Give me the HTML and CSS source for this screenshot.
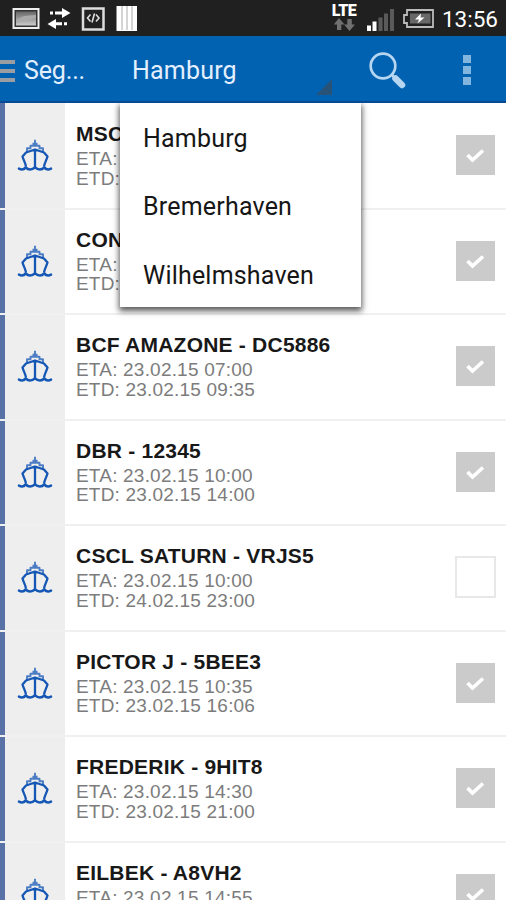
FILE: index.html
```html
<!DOCTYPE html>
<html lang="de">
<head>
<meta charset="utf-8">
<title>Segelliste</title>
<link rel="stylesheet" href="styles.css">
</head>
<body>
<svg class="defs" aria-hidden="true">
  <symbol id="ship" viewBox="0 0 36 34">
    <g fill="none" stroke="#1557b5" stroke-linejoin="round">
      <path stroke-width="1.900" d="M18 .8v6M15.500 4.700h5M10 14V9.200h3.500V6.700h9v2.500H26V14" opacity=".75"/>
      <path stroke-width="2.300" d="M9 27.500C8.700 24.500 6.500 21 5.500 17.500L9 13.500l9-3 9 3 3.500 4c-1 3.500-3.200 7-3.500 10M18 10.500V29"/>
      <path stroke-width="2.600" stroke-linecap="round" d="M2 29.700c3 1.600 4.700 1.200 6.700-1.300 2.500 2.800 6.300 2.800 9.300 0 3 2.800 6.800 2.800 9.300 0 2 2.500 3.700 2.900 6.700 1.300"/>
    </g>
  </symbol>
  <symbol id="check" viewBox="0 0 39 40">
    <path d="M11.500 20l5 5L27 15.500" fill="none" stroke="#fff" stroke-width="3.700"/>
  </symbol>
</svg>

<div class="screen">
  <header class="status">
    <svg class="status-left" width="140" height="36" viewBox="0 0 140 36">
      <defs><linearGradient id="photo" x2="0" y2="1"><stop stop-color="#666"/><stop offset="1" stop-color="#ccc"/></linearGradient></defs>
      <rect x="13.500" y="9" width="25" height="19" fill="#333" stroke="#eee" stroke-width="2"/>
      <rect x="16" y="11.500" width="20" height="14" fill="url(#photo)"/>
      <path d="M16 20l8-4 12-1v3l-20 5z" fill="#aaa"/>
      <g fill="#fff">
        <path d="M50 11.500h3v3h-3zM55 11.500h7V8l8.500 5-8.500 5v-3.500h-7zM64 22.300h3v3h-3zM62 22.300h-6V19l-8.500 5 8.500 5v-3.700h6z"/>
        <path d="M116.500 6H137v25h-20.500z"/>
      </g>
      <path d="M122 6v24M127 6v24M132 6v24" stroke="#aaa"/>
      <rect x="83" y="8.500" width="20.500" height="21" fill="#222" stroke="#ddd" stroke-width="2.500"/>
      <path d="M90.500 14.500L87.500 18l3 3.500M96 14.500l3 3.500-3 3.500M94.500 13.500l-2.500 9" fill="none" stroke="#ddd" stroke-width="1.600"/>
    </svg>
    <div class="status-right">
      <div class="lte">
        <span>LTE</span>
        <svg width="22" height="13" viewBox="0 0 22 13"><path fill="#707070" d="M6 0l5.500 6.500H8.300V12H4V6.500H.8zM16.500 13L22 6.500h-3.200V1h-4.500v5.500H11z"/></svg>
      </div>
      <svg class="signal" width="30" height="22" viewBox="0 0 30 22">
        <path fill="#fff" d="M1 16.500h4V22H1zM6.500 12.500h4V22h-4z"/>
        <path fill="#5a5a5a" d="M12.500 8.500h4V22h-4zM18 4.500h4V22h-4zM24 0h4v22h-4z"/>
      </svg>
      <svg class="battery" width="33" height="19" viewBox="0 0 33 19">
        <path d="M5 1h26v17H5v-4H2V6h3z" fill="#222" stroke="#bbb" stroke-width="1.800"/>
        <path d="M8 4.500h20.500v10H8z" fill="#686868"/>
        <path d="M19 4.500l-6 6h4l-1.500 4 7-6h-4z" fill="#fff"/>
      </svg>
      <span class="clock">13:56</span>
    </div>
  </header>

  <nav class="bar">
    <div class="burger"><i></i><i></i><i></i></div>
    <span class="title">Seg...</span>
    <div class="spinner">Hamburg<svg width="16" height="16" viewBox="0 0 16 16"><path d="M16 0v16H0z" fill="#285379"/></svg></div>
    <svg class="search" width="40" height="40" viewBox="0 0 40 40">
      <circle cx="15" cy="15" r="12.300" fill="none" stroke="#b5d5f0" stroke-width="2.700"/>
      <path d="M23.500 23.500l3.500 3.500" stroke="#b5d5f0" stroke-width="3"/>
      <path d="M27.500 27.500l6.500 6.500" stroke="#b5d5f0" stroke-width="6.500" stroke-linecap="round"/>
    </svg>
    <div class="more"><i></i><i></i><i></i></div>
    <div class="menu">
      <div>Hamburg</div>
      <div>Bremerhaven</div>
      <div>Wilhelmshaven</div>
    </div>
  </nav>

  <main class="list">
    <section class="row"><div class="icon"><svg><use href="#ship"/></svg></div><div class="info"><h2>MSC</h2><p>ETA:</p><p>ETD:</p></div><div class="box on"><svg><use href="#check"/></svg></div></section>
    <section class="row"><div class="icon"><svg><use href="#ship"/></svg></div><div class="info"><h2>CON</h2><p>ETA:</p><p>ETD:</p></div><div class="box on"><svg><use href="#check"/></svg></div></section>
    <section class="row"><div class="icon"><svg><use href="#ship"/></svg></div><div class="info"><h2>BCF AMAZONE - DC5886</h2><p>ETA: 23.02.15 07:00</p><p>ETD: 23.02.15 09:35</p></div><div class="box on"><svg><use href="#check"/></svg></div></section>
    <section class="row"><div class="icon"><svg><use href="#ship"/></svg></div><div class="info"><h2>DBR - 12345</h2><p>ETA: 23.02.15 10:00</p><p>ETD: 23.02.15 14:00</p></div><div class="box on"><svg><use href="#check"/></svg></div></section>
    <section class="row"><div class="icon"><svg><use href="#ship"/></svg></div><div class="info"><h2>CSCL SATURN - VRJS5</h2><p>ETA: 23.02.15 10:00</p><p>ETD: 24.02.15 23:00</p></div><div class="box"></div></section>
    <section class="row"><div class="icon"><svg><use href="#ship"/></svg></div><div class="info"><h2>PICTOR J - 5BEE3</h2><p>ETA: 23.02.15 10:35</p><p>ETD: 23.02.15 16:06</p></div><div class="box on"><svg><use href="#check"/></svg></div></section>
    <section class="row"><div class="icon"><svg><use href="#ship"/></svg></div><div class="info"><h2>FREDERIK - 9HIT8</h2><p>ETA: 23.02.15 14:30</p><p>ETD: 23.02.15 21:00</p></div><div class="box on"><svg><use href="#check"/></svg></div></section>
    <section class="row"><div class="icon"><svg><use href="#ship"/></svg></div><div class="info"><h2>EILBEK - A8VH2</h2><p>ETA: 23.02.15 14:55</p></div><div class="box on"><svg><use href="#check"/></svg></div></section>
  </main>
</div>
</body>
</html>
```
FILE: styles.css
```css
* { box-sizing: border-box; }
body { margin: 0; overflow: hidden; background: #fff; font-family: "Liberation Sans", sans-serif; }
.defs { display: none; }
svg { display: block; flex: none; }
.screen { display: flex; flex-direction: column; width: 506px; height: 900px; overflow: hidden; }

.status { flex: none; display: flex; justify-content: space-between; height: 36px; background: #202020; color: #fff; }
.status-right { display: flex; padding-right: 8px; }
.lte { display: flex; flex-direction: column; align-items: center; width: 26px; padding-top: 3px; }
.lte span { font: 900 16px/15px Roboto, sans-serif; letter-spacing: -.6px; height: 15px; }
.signal { margin: 9px 0 0 9px; }
.battery { margin: 9px 0 0 6px; }
.clock { margin-left: 7px; font: 22.500px/38px Roboto, sans-serif; }

.bar { position: relative; flex: none; display: flex; height: 67px; background: #0062b1; border-bottom: 2px solid #064a94; color: #e3efff; font: 25px/70px Roboto, sans-serif; letter-spacing: .2px; }
.burger { display: flex; flex-direction: column; gap: 5px; width: 15px; padding-top: 24px; }
.burger i { height: 4px; background: #9a9da2; }
.title { width: 96px; padding-left: 9px; letter-spacing: -.15px; }
.spinner { display: flex; justify-content: space-between; width: 221px; padding-left: 21px; }
.spinner svg { margin: 43px 0 0; }
.search { margin: 15px 0 0 36px; }
.more { display: flex; flex-direction: column; gap: 3px; margin-left: 55px; padding-top: 19px; }
.more i { width: 8px; height: 8px; background: #83b6df; }
.menu { position: absolute; z-index: 2; left: 120px; top: 67px; width: 241px; height: 204px; padding-left: 23px; background: #fff; color: #161616; box-shadow: 0 3px 6px 1px rgba(0,0,0,.65); clip-path: inset(0 -12px -14px -12px); }
.menu div { height: 68.300px; line-height: 71px; }

.list { flex: 1; overflow: hidden; padding-top: 1px; background: linear-gradient(90deg, #5872a8 5px, #eee 5px, #eee 65px, #fff 65px); }
.row { display: flex; height: 105.500px; border-bottom: 2px solid #f0f0f0; padding-left: 5px; }
.icon { width: 60px; padding: 35px 0 0 12px; }
.icon svg { width: 36px; height: 34px; }
.info { flex: 1; padding: 18px 0 0 11px; white-space: nowrap; }
h2 { margin: 0; height: 25px; font-size: 21px; line-height: 24px; color: #181818; letter-spacing: .22px; }
p { margin: 0; height: 19.500px; font-size: 19px; line-height: 23px; color: #7c7c7c; letter-spacing: .2px; }
.box { width: 41px; height: 42px; margin: 30px 10px 0 0; border: 2px solid #e8e8e8; background: #fff; }
.box.on { width: 39px; height: 40px; margin: 31px 11px 0 0; border: 0; background: #cbcbcb; }
.box svg { width: 39px; height: 40px; }
```
